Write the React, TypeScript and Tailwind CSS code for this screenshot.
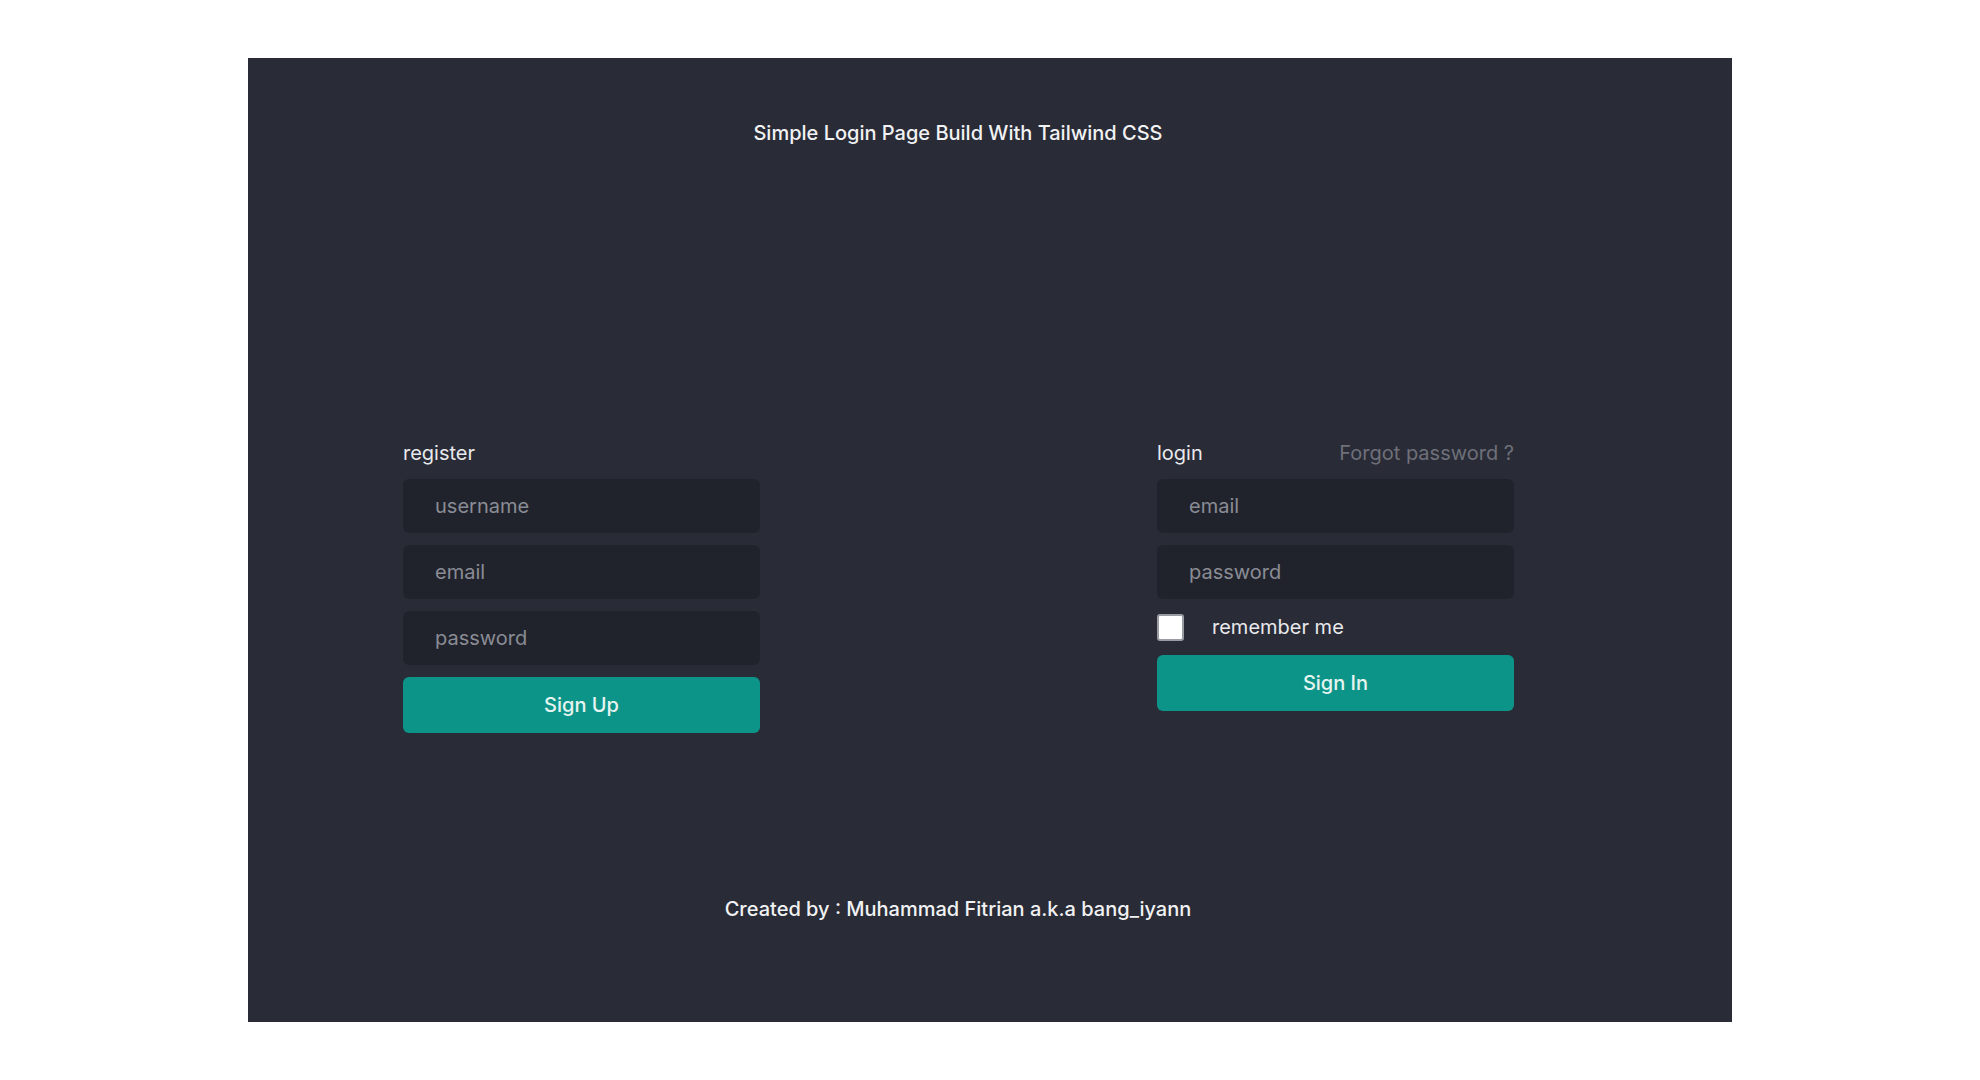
export default function App() {
  return (
    <div className="w-full h-[1080px] bg-white pt-[58px]" style={{ fontFamily: 'Inter, "Noto Sans", sans-serif' }}>
      <div className="mx-auto w-[1484px] h-[964px] bg-[#292b36] text-[#e8e9ec]">
        <div className="w-[1420px] pt-[61px] text-center text-[20px] font-medium leading-[28px] text-[#f1f2f4]">
          Simple Login Page Build With Tailwind CSS
        </div>

        <div className="flex items-start pl-[155px] mt-[292px] gap-[397px]">
          <div className="w-[357px] flex flex-col">
            <span className="text-[20px] leading-[28px] mb-3">register</span>
            <input
              placeholder="username"
              className="h-[54px] rounded-md bg-[#21232c] px-8 text-[20px] text-white placeholder:text-[#8a8c95] outline-none mb-3"
            />
            <input
              placeholder="email"
              className="h-[54px] rounded-md bg-[#21232c] px-8 text-[20px] text-white placeholder:text-[#8a8c95] outline-none mb-3"
            />
            <input
              placeholder="password"
              className="h-[54px] rounded-md bg-[#21232c] px-8 text-[20px] text-white placeholder:text-[#8a8c95] outline-none mb-3"
            />
            <button className="h-[56px] rounded-md bg-[#0d9488] text-[20px] font-medium text-[#e6f4f1]">
              Sign Up
            </button>
          </div>

          <div className="w-[357px] flex flex-col">
            <div className="flex justify-between mb-3 text-[20px] leading-[28px]">
              <span>login</span>
              <span className="text-[#6e707a]">Forgot password ?</span>
            </div>
            <input
              placeholder="email"
              className="h-[54px] rounded-md bg-[#21232c] px-8 text-[20px] text-white placeholder:text-[#8a8c95] outline-none mb-3"
            />
            <input
              placeholder="password"
              className="h-[54px] rounded-md bg-[#21232c] px-8 text-[20px] text-white placeholder:text-[#8a8c95] outline-none"
            />
            <label className="flex items-center h-[28px] my-[14px]">
              <span className="w-[27px] h-[27px] rounded-[3px] bg-white border-2 border-[#9a9ca4]" />
              <span className="ml-[28px] text-[20px]">remember me</span>
            </label>
            <button className="h-[56px] rounded-md bg-[#0d9488] text-[20px] font-medium text-[#e6f4f1]">
              Sign In
            </button>
          </div>
        </div>

        <div className="w-[1420px] mt-[162px] text-center text-[20px] font-medium leading-[28px] text-[#f1f2f4]">
          Created by : Muhammad Fitrian a.k.a bang_iyann
        </div>
      </div>
    </div>
  );
}
